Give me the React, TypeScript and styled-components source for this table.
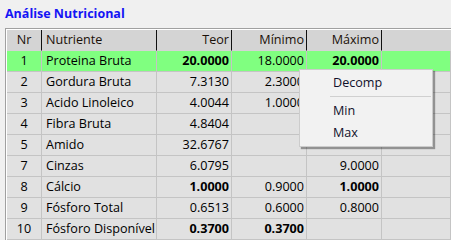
import React from 'react';
import styled, { createGlobalStyle } from 'styled-components';

const Global = createGlobalStyle`
  html, body { margin: 0; padding: 0; background: #f0f0f0; }
  body {
    font-family: "Open Sans", "Noto Sans", sans-serif;
    width: 451px;
    height: 240px;
    overflow: hidden;
  }
`;

const Page = styled.div`
  position: relative;
  height: 240px;
  box-sizing: border-box;
  padding: 4px 0 0 5px;
  overflow: hidden;
`;

const Title = styled.div`
  font-family: "Open Sans", sans-serif;
  font-weight: 700;
  font-size: 12.5px;
  line-height: 20px;
  height: 24px;
  color: #1414f5;
  white-space: nowrap;
`;

const Frame = styled.div`
  border-top: 1px solid #a0a0a0;
  border-left: 1px solid #a0a0a0;
`;

const Grid = styled.div`
  border-top: 1px solid #ffffff;
  border-left: 1px solid #ffffff;
  display: grid;
  grid-template-columns: 35px 115px 75px 75px 75px 1fr;
  grid-auto-rows: 21px;
`;

const HeadCell = styled.div<{ $align: 'left' | 'center' | 'right'; $last?: boolean }>`
  box-sizing: border-box;
  background: #d4d4d4;
  border-right: ${(p) => (p.$last ? 'none' : '1px solid #101010')};
  border-bottom: 1px solid #d4d4d4;
  font-size: 12.6px;
  line-height: 20px;
  color: #1a1008;
  text-align: ${(p) => p.$align};
  padding: 0 ${(p) => (p.$align === 'right' ? '2px' : '0')} 0 ${(p) => (p.$align === 'left' ? '4px' : '0')};
  white-space: nowrap;
  overflow: hidden;
`;

const Cell = styled.div<{ $align: 'left' | 'center' | 'right'; $bold?: boolean; $hi?: boolean }>`
  box-sizing: border-box;
  background: ${(p) => (p.$hi ? '#80ff80' : '#e1e1e1')};
  border-right: 1px solid #c4c4c4;
  border-bottom: 1px solid #c4c4c4;
  font-size: 12.6px;
  line-height: 20px;
  color: #000;
  font-weight: ${(p) => (p.$bold ? 700 : 400)};
  text-align: ${(p) => p.$align};
  padding: 0 ${(p) => (p.$align === 'right' ? '2px' : '0')} 0 ${(p) => (p.$align === 'left' ? '4px' : '0')};
  white-space: nowrap;
  overflow: hidden;
`;

const Menu = styled.div`
  position: absolute;
  left: 299px;
  top: 69px;
  width: 134px;
  height: 78px;
  box-sizing: border-box;
  background: #f2f2f2;
  border: 1px solid #cccccc;
  box-shadow: 2px 2px 1px rgba(0, 0, 0, 0.35);
  padding: 2px 0;
`;

const MenuItem = styled.div`
  height: 22px;
  line-height: 22px;
  padding-left: 33px;
  font-size: 12.6px;
  color: #10102a;
`;

const MenuSep = styled.div`
  height: 1px;
  background: #d0d0d0;
  margin: 2px 1px 3px 30px;
`;

type Row = {
  nr: number;
  name: string;
  teor: string;
  min: string;
  max: string;
  bTeor?: boolean;
  bMin?: boolean;
  bMax?: boolean;
  hi?: boolean;
};

const rows: Row[] = [
  { nr: 1, name: 'Proteina Bruta', teor: '20.0000', min: '18.0000', max: '20.0000', bTeor: true, bMax: true, hi: true },
  { nr: 2, name: 'Gordura Bruta', teor: '7.3130', min: '2.3000', max: '' },
  { nr: 3, name: 'Acido Linoleico', teor: '4.0044', min: '1.0000', max: '' },
  { nr: 4, name: 'Fibra Bruta', teor: '4.8404', min: '', max: '' },
  { nr: 5, name: 'Amido', teor: '32.6767', min: '', max: '' },
  { nr: 7, name: 'Cinzas', teor: '6.0795', min: '', max: '9.0000' },
  { nr: 8, name: 'Cálcio', teor: '1.0000', min: '0.9000', max: '1.0000', bTeor: true, bMax: true },
  { nr: 9, name: 'Fósforo Total', teor: '0.6513', min: '0.6000', max: '0.8000' },
  { nr: 10, name: 'Fósforo Disponível', teor: '0.3700', min: '0.3700', max: '', bTeor: true, bMin: true },
];

export default function App() {
  return (
    <>
      <Global />
      <Page>
        <Title>Análise Nutricional</Title>
        <Frame>
          <Grid>
            <HeadCell $align="center">Nr</HeadCell>
            <HeadCell $align="left">Nutriente</HeadCell>
            <HeadCell $align="right">Teor</HeadCell>
            <HeadCell $align="right">Mínimo</HeadCell>
            <HeadCell $align="right">Máximo</HeadCell>
            <HeadCell $align="left" $last />
            {rows.map((r) => (
              <React.Fragment key={r.nr}>
                <Cell $align="center" $hi={r.hi}>{r.nr}</Cell>
                <Cell $align="left" $hi={r.hi}>{r.name}</Cell>
                <Cell $align="right" $hi={r.hi} $bold={r.bTeor}>{r.teor}</Cell>
                <Cell $align="right" $hi={r.hi} $bold={r.bMin}>{r.min}</Cell>
                <Cell $align="right" $hi={r.hi} $bold={r.bMax}>{r.max}</Cell>
                <Cell $align="left" $hi={r.hi} />
              </React.Fragment>
            ))}
          </Grid>
        </Frame>
        <Menu>
          <MenuItem>Decomp</MenuItem>
          <MenuSep />
          <MenuItem>Min</MenuItem>
          <MenuItem>Max</MenuItem>
        </Menu>
      </Page>
    </>
  );
}
